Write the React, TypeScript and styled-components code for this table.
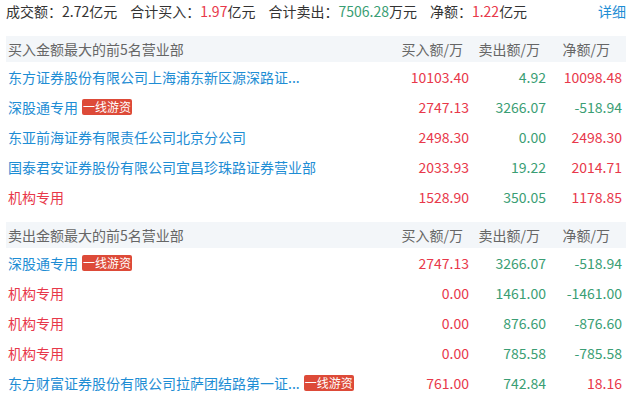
import React from "react";
import styled, { createGlobalStyle } from "styled-components";

const GlobalStyle = createGlobalStyle`
  html, body {
    margin: 0;
    padding: 0;
    background: #fff;
  }
  body {
    font-family: "Noto Sans CJK SC", "Noto Sans", sans-serif;
    font-size: 14px;
    color: #333;
  }
`;

const color = {
  red: "#e8384a",
  green: "#3a9e74",
  blue: "#1e8dd4",
  text: "#333333",
  label: "#666666",
  headBg: "#f3f6f9",
  badge: "#dd4a38",
};

type Tone = "red" | "green" | "blue" | "text";

const shorten = (s: string) => (s.length > 22 ? s.slice(0, 20) + "..." : s);

const Page = styled.div`
  width: 620px;
  padding: 0 9px 0 6px;
`;

const Summary = styled.div`
  display: flex;
  align-items: center;
  height: 22px;
  line-height: 22px;
  margin-bottom: 14px;
  white-space: nowrap;
`;

const SummaryItem = styled.span`
  margin-right: 13px;
  color: ${color.text};
`;

const Value = styled.span<{ tone: Tone }>`
  color: ${({ tone }) => color[tone]};
`;

const DetailLink = styled.a`
  margin-left: auto;
  color: ${color.blue};
  text-decoration: none;
  cursor: pointer;
`;

const Section = styled.section`
  margin-bottom: 10px;
`;

const Grid = styled.div`
  display: grid;
  grid-template-columns: 1fr 80px 77px 76px;
  padding-right: 4px;
  align-items: center;
`;

const HeadRow = styled(Grid)`
  height: 26px;
  background: ${color.headBg};
  color: ${color.label};
`;

const HeadCell = styled.div<{ right?: boolean; pad?: number }>`
  padding-left: ${({ right }) => (right ? 0 : 2)}px;
  padding-right: ${({ pad = 0 }) => pad}px;
  text-align: ${({ right }) => (right ? "right" : "left")};
  white-space: nowrap;
`;

const Row = styled(Grid)`
  height: 30px;
`;

const NameCell = styled.div`
  display: flex;
  align-items: center;
  min-width: 0;
  padding-left: 2px;
`;

const Name = styled.span<{ tone: Tone }>`
  color: ${({ tone }) => color[tone]};
  white-space: nowrap;
  cursor: pointer;
`;

const Badge = styled.span`
  margin-left: 4px;
  padding: 0 1px;
  height: 16px;
  line-height: 16px;
  font-size: 12px;
  color: #fff;
  background: ${color.badge};
  border-radius: 2px;
  white-space: nowrap;
`;

const Num = styled.div<{ tone: Tone }>`
  text-align: right;
  color: ${({ tone }) => color[tone]};
  white-space: nowrap;
`;

interface Trade {
  name: string;
  org?: boolean;
  hot?: boolean;
  buy: string;
  sell: string;
  net: string;
}

const buyList: Trade[] = [
  { name: "东方证券股份有限公司上海浦东新区源深路证券营业部", buy: "10103.40", sell: "4.92", net: "10098.48" },
  { name: "深股通专用", hot: true, buy: "2747.13", sell: "3266.07", net: "-518.94" },
  { name: "东亚前海证券有限责任公司北京分公司", buy: "2498.30", sell: "0.00", net: "2498.30" },
  { name: "国泰君安证券股份有限公司宜昌珍珠路证券营业部", buy: "2033.93", sell: "19.22", net: "2014.71" },
  { name: "机构专用", org: true, buy: "1528.90", sell: "350.05", net: "1178.85" },
];

const sellList: Trade[] = [
  { name: "深股通专用", hot: true, buy: "2747.13", sell: "3266.07", net: "-518.94" },
  { name: "机构专用", org: true, buy: "0.00", sell: "1461.00", net: "-1461.00" },
  { name: "机构专用", org: true, buy: "0.00", sell: "876.60", net: "-876.60" },
  { name: "机构专用", org: true, buy: "0.00", sell: "785.58", net: "-785.58" },
  { name: "东方财富证券股份有限公司拉萨团结路第一证券营业部", hot: true, buy: "761.00", sell: "742.84", net: "18.16" },
];

const TradeTable: React.FC<{ title: string; rows: Trade[] }> = ({ title, rows }) => (
  <Section>
    <HeadRow>
      <HeadCell>{title}</HeadCell>
      <HeadCell right pad={6}>买入额/万</HeadCell>
      <HeadCell right pad={6}>卖出额/万</HeadCell>
      <HeadCell right pad={12}>净额/万</HeadCell>
    </HeadRow>
    {rows.map((r, i) => (
      <Row key={i}>
        <NameCell>
          <Name tone={r.org ? "red" : "blue"} title={r.name}>
            {shorten(r.name)}
          </Name>
          {r.hot && <Badge>一线游资</Badge>}
        </NameCell>
        <Num tone="red">{r.buy}</Num>
        <Num tone="green">{r.sell}</Num>
        <Num tone={r.net.startsWith("-") ? "green" : "red"}>{r.net}</Num>
      </Row>
    ))}
  </Section>
);

export default function App() {
  return (
    <Page>
      <GlobalStyle />
      <Summary>
        <SummaryItem>
          成交额：<Value tone="text">2.72</Value>亿元
        </SummaryItem>
        <SummaryItem>
          合计买入：<Value tone="red">1.97</Value>亿元
        </SummaryItem>
        <SummaryItem>
          合计卖出：<Value tone="green">7506.28</Value>万元
        </SummaryItem>
        <SummaryItem>
          净额：<Value tone="red">1.22</Value>亿元
        </SummaryItem>
        <DetailLink>详细</DetailLink>
      </Summary>
      <TradeTable title="买入金额最大的前5名营业部" rows={buyList} />
      <TradeTable title="卖出金额最大的前5名营业部" rows={sellList} />
    </Page>
  );
}
